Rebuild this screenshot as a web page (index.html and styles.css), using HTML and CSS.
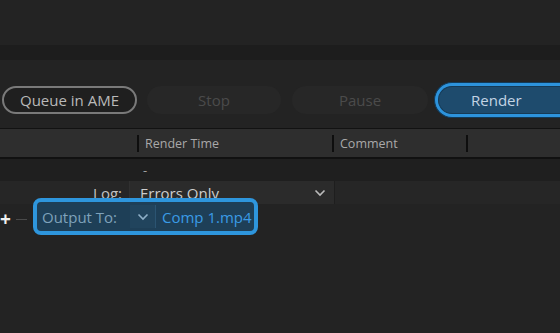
FILE: index.html
```html
<!DOCTYPE html>
<html>
<head>
  <title>Render Queue</title>
  <link rel="stylesheet" href="styles.css">
</head>
<body>

<div class="top"></div>
<div class="band"></div>

<div class="toolbar">
  <button class="pill queue">Queue in AME</button>
  <button class="pill off stop">Stop</button>
  <button class="pill off pause">Pause</button>
  <div class="render-ring">
    <button class="pill render">Render</button>
  </div>
</div>

<div class="head-row">
  <div class="col col-a"></div>
  <div class="col col-time"><span class="sep"></span>Render Time</div>
  <div class="col col-comment"><span class="sep"></span>Comment</div>
  <div class="col col-rest"><span class="sep"></span></div>
</div>

<div class="row status-row">
  <div class="cell-left"></div>
  <div class="cell-time">-</div>
</div>

<div class="row log-row">
  <div class="log-label">Log:</div>
  <div class="dropdown">
    <span>Errors Only</span>
    <svg class="chev" width="12" height="8" viewBox="0 0 12 8"><path d="M1.5 1.5 L6 6 L10.5 1.5" fill="none" stroke="#bbb" stroke-width="1.6"/></svg>
  </div>
</div>

<div class="row output-row">
  <span class="plus">+</span>
  <span class="minus"></span>
  <div class="highlight">
    <span class="out-label">Output To:</span>
    <span class="out-drop">
      <svg width="12" height="8" viewBox="0 0 12 8"><path d="M1.5 1.5 L6 6 L10.5 1.5" fill="none" stroke="#8fb0c8" stroke-width="1.6"/></svg>
    </span>
    <span class="out-file">Comp 1.mp4</span>
  </div>
</div>

</body>
</html>
```

FILE: styles.css
```css
body {
  margin: 0;
  padding: 0;
  background-color: #232323;
  font-family: 'Open Sans', 'Noto Sans', sans-serif;
  width: 560px;
  height: 333px;
  overflow: hidden;
}

.top {
  height: 45px;
}

.band {
  height: 15px;
  background-color: #1d1d1d;
}

.toolbar {
  height: 68px;
  display: flex;
  align-items: center;
  padding: 12px 0 0 2px;
  gap: 10px;
  box-sizing: border-box;
}

.pill {
  height: 28px;
  border-radius: 14px;
  font-family: inherit;
  font-size: 15px;
  padding: 0;
  box-sizing: border-box;
  flex-shrink: 0;
}

.queue {
  width: 135px;
  background-color: #1f1f1f;
  border: 2px solid #7a7a7a;
  color: #b9b9b9;
}

.off {
  width: 134px;
  background-color: #272727;
  border: none;
  color: #4b4b4b;
}

.pause {
  margin-left: 1px;
  width: 136px;
}

/* cut off by the right edge of the panel */
.render-ring {
  flex: 1;
  margin-left: -4px;
  padding: 3px 0 3px 3px;
  border: 1px solid #123a58;
  border-right: none;
  border-radius: 19px 0 0 19px;
  background-color: #2d93dc;
}

.render {
  display: block;
  width: 100%;
  height: 28px;
  border-radius: 14px 0 0 14px;
  background-color: #1e4b6d;
  border: 1px solid #163a55;
  border-right: none;
  color: #c3d4e4;
  text-align: left;
  padding-left: 32px;
}

.head-row {
  display: flex;
  height: 28px;
  background-color: #2e2e2e;
  border-top: 1px solid #121212;
  border-bottom: 2px solid #111;
  color: #a9a9a9;
  font-size: 12.5px;
  align-items: center;
}

.col {
  display: flex;
  align-items: center;
  height: 100%;
}

.col-a {
  width: 137px;
}

.col-time {
  width: 195px;
}

.col-comment {
  width: 134px;
}

.col-rest {
  flex: 1;
}

.sep {
  width: 2px;
  height: 17px;
  background-color: #0e0e0e;
  margin-right: 6px;
}

.row {
  display: flex;
  align-items: center;
}

.status-row {
  height: 22px;
  background-color: #1f1f1f;
  color: #a0a0a0;
  font-size: 13px;
}

.cell-left {
  width: 143px;
}

.log-row {
  height: 23px;
  background-color: #262626;
}

.log-label {
  width: 122px;
  text-align: right;
  color: #c2c2c2;
  font-size: 15px;
}

.dropdown {
  margin-left: 7px;
  width: 206px;
  height: 23px;
  box-sizing: border-box;
  background-color: #2b2b2b;
  border-left: 1px solid #303030;
  border-right: 1px solid #1e1e1e;
  display: flex;
  align-items: center;
  justify-content: space-between;
  padding: 0 8px 0 10px;
  color: #cdcdcd;
  font-size: 15px;
}

.output-row {
  height: 30px;
  position: relative;
}

.plus {
  width: 12px;
  color: #f0f0f0;
  font-size: 19px;
  font-weight: bold;
  line-height: 1;
}

.minus {
  width: 11px;
  height: 1px;
  background-color: #4a4a4a;
  margin-left: 4px;
}

.highlight {
  position: absolute;
  left: 33px;
  top: -6px;
  width: 225px;
  height: 37px;
  box-sizing: border-box;
  border: 4px solid #2e96dd;
  border-radius: 8px;
  background-color: #1e3f57;
  display: flex;
  align-items: center;
  padding-left: 5px;
  font-size: 15px;
}

.out-label {
  color: #7fa2bb;
  width: 88px;
}

.out-drop {
  width: 25px;
  height: 23px;
  display: flex;
  align-items: center;
  justify-content: center;
  background-color: #21445d;
  border-right: 1px solid #2b5472;
  margin-right: 6px;
}

.out-file {
  color: #3a9be6;
}
```
